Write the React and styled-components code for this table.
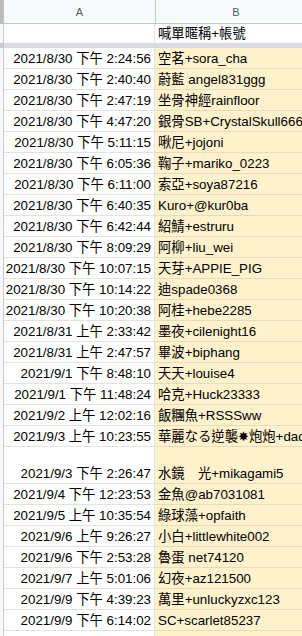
import styled, { createGlobalStyle } from 'styled-components';

const GlobalStyle = createGlobalStyle`
  html, body {
    margin: 0;
    padding: 0;
    background: #fff;
  }
  body {
    font-family: Arial, "Liberation Sans", "Noto Sans CJK TC", sans-serif;
  }
`;

const rows = [
  ['2021/8/30 下午 2:24:56', '空茗+sora_cha'],
  ['2021/8/30 下午 2:40:40', '蔚藍 angel831ggg'],
  ['2021/8/30 下午 2:47:19', '坐骨神經rainfloor'],
  ['2021/8/30 下午 4:47:20', '銀骨SB+CrystalSkull666'],
  ['2021/8/30 下午 5:11:15', '啾尼+jojoni'],
  ['2021/8/30 下午 6:05:36', '鞠子+mariko_0223'],
  ['2021/8/30 下午 6:11:00', '索亞+soya87216'],
  ['2021/8/30 下午 6:40:35', 'Kuro+@kur0ba'],
  ['2021/8/30 下午 6:42:44', '紹鯖+estruru'],
  ['2021/8/30 下午 8:09:29', '阿柳+liu_wei'],
  ['2021/8/30 下午 10:07:15', '天芽+APPIE_PIG'],
  ['2021/8/30 下午 10:14:22', '迪spade0368'],
  ['2021/8/30 下午 10:20:38', '阿桂+hebe2285'],
  ['2021/8/31 上午 2:33:42', '墨夜+cilenight16'],
  ['2021/8/31 上午 2:47:57', '畢波+biphang'],
  ['2021/9/1 下午 8:48:10', '天天+louise4'],
  ['2021/9/1 下午 11:48:24', '哈克+Huck23333'],
  ['2021/9/2 上午 12:02:16', '飯糰魚+RSSSww'],
  ['2021/9/3 上午 10:23:55', '華麗なる逆襲✸炮炮+dad'],
  ['2021/9/3 下午 2:26:47', '水鏡　光+mikagami5', true],
  ['2021/9/4 下午 12:23:53', '金魚@ab7031081'],
  ['2021/9/5 上午 10:35:54', '綠球藻+opfaith'],
  ['2021/9/6 上午 9:26:27', '小白+littlewhite002'],
  ['2021/9/6 下午 2:53:28', '魯蛋 net74120'],
  ['2021/9/7 上午 5:01:06', '幻夜+az121500'],
  ['2021/9/9 下午 4:39:23', '萬里+unluckyzxc123'],
  ['2021/9/9 下午 6:14:02', 'SC+scarlet85237'],
  ['', ''],
];

const Sheet = styled.div`
  width: 302px;
  height: 636px;
  overflow: hidden;
  background: #fff;
  font-size: 13.33px;
  color: #000;
`;

const Row = styled.div`
  display: flex;
  height: ${p => p.$h}px;
`;

const Gutter = styled.div`
  flex: 0 0 3px;
  background: ${p => p.$bg || '#f8f9fa'};
  border-right: 1px solid #c4c7c5;
`;

const ColHead = styled.div`
  flex: 0 0 ${p => p.$w}px;
  display: flex;
  align-items: center;
  justify-content: center;
  background: #f8f9fa;
  border-right: 1px solid #c4c7c5;
  border-bottom: 1px solid #c4c7c5;
  color: #575a5e;
  font-size: 11px;
`;

const Cell = styled.div`
  flex: 0 0 ${p => p.$w}px;
  display: flex;
  align-items: flex-end;
  justify-content: ${p => (p.$right ? 'flex-end' : 'flex-start')};
  padding: 0 3px 1px 3px;
  box-sizing: border-box;
  line-height: 17px;
  white-space: nowrap;
  overflow: hidden;
  background: ${p => (p.$yellow ? '#fff2cc' : '#fff')};
  border-right: 1px solid ${p => (p.$yellow ? '#e6dcbc' : '#e2e3e3')};
  border-bottom: ${p => (p.$noLine ? 'none' : `1px solid ${p.$yellow ? '#e6dcbc' : '#e2e3e3'}`)};
`;

const FreezeBar = styled.div`
  flex: 1;
  background: #dadce0;
`;

export default function App() {
  return (
    <>
      <GlobalStyle />
      <Sheet>
        <Row $h={24}>
          <Gutter $bg="#bdbdbd" />
          <ColHead $w={151}>A</ColHead>
          <ColHead $w={160}>B</ColHead>
        </Row>
        <Row $h={19}>
          <Gutter />
          <Cell $w={151} $noLine />
          <Cell $w={160} $noLine>喊單暱稱+帳號</Cell>
        </Row>
        <Row $h={5}>
          <Gutter $bg="#c8cace" />
          <FreezeBar />
        </Row>
        {rows.map(([time, name, tall], i) => (
          <Row key={i} $h={tall ? 37 : 21}>
            <Gutter />
            <Cell $w={151} $right>{time}</Cell>
            <Cell $w={160} $yellow>{name}</Cell>
          </Row>
        ))}
      </Sheet>
    </>
  );
}
